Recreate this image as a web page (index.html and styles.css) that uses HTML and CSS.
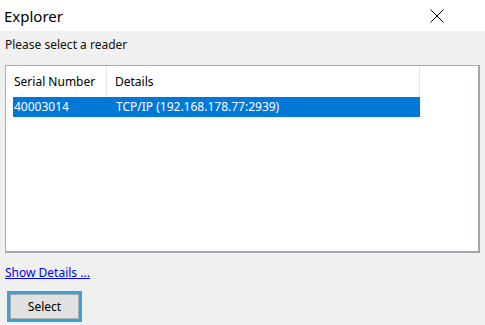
FILE: index.html
```html
<!DOCTYPE html>
<html lang="en">
<head>
    <meta charset="UTF-8">
    <title>Explorer</title>
    <link rel="stylesheet" href="styles.css">
</head>
<body>
    <div class="window">
        <div class="titlebar">
            <span class="title">Explorer</span>
            <svg class="close" width="14" height="14" viewBox="0 0 14 14">
                <path d="M0.5 0.5 L13.5 13.5 M13.5 0.5 L0.5 13.5" stroke="#000" stroke-width="1" fill="none"/>
            </svg>
        </div>
        <div class="content">
            <div class="prompt">Please select a reader</div>
            <div class="list">
                <div class="list-head">
                    <div class="col col-serial">Serial Number</div>
                    <div class="col col-details">Details</div>
                    <div class="col col-rest"></div>
                </div>
                <div class="list-row selected">
                    <div class="cell cell-serial">40003014</div>
                    <div class="cell cell-details">TCP/IP (192.168.178.77:2939)</div>
                </div>
            </div>
            <a class="details-link" href="#">Show Details ...</a>
            <button class="select-btn">Select</button>
        </div>
    </div>
</body>
</html>
```

FILE: styles.css
```css
body {
    margin: 0;
    font-family: "Noto Sans", "Liberation Sans", sans-serif;
    font-size: 12px;
    color: #000;
}
.window {
    width: 485px;
    height: 325px;
    display: flex;
    flex-direction: column;
    background-color: #f0f0f0;
    overflow: hidden;
}
.titlebar {
    height: 31px;
    background-color: #fff;
    display: flex;
    align-items: center;
    justify-content: space-between;
    padding: 0 41px 0 4px;
}
.title {
    font-size: 15px;
    color: #000;
}
.close {
    display: block;
}
.content {
    flex: 1;
    display: flex;
    flex-direction: column;
    align-items: flex-start;
    padding: 5px 4px 0 5px;
}
.prompt {
    height: 17px;
    line-height: 17px;
    color: #111;
}
.list {
    margin-top: 12px;
    width: 472px;
    height: 185px;
    background-color: #fff;
    border: 1px solid #adadad;
    border-right: 2px solid #a0a4ab;
    border-bottom: 2px solid #a0a4ab;
}
.list-head {
    display: flex;
    height: 31px;
}
.col {
    height: 31px;
    line-height: 31px;
    padding-left: 8px;
    box-sizing: border-box;
    border-right: 1px solid #e5e5e5;
}
.col-serial {
    width: 101px;
}
.col-details {
    width: 313px;
}
.col-rest {
    flex: 1;
    border-right: none;
}
.list-row {
    display: flex;
    margin-left: 7px;
    width: 407px;
    height: 20px;
    line-height: 20px;
}
.selected {
    background-color: #0078d7;
    color: #fff;
}
.cell {
    padding-left: 1px;
    box-sizing: border-box;
}
.cell-serial {
    width: 102px;
}
.cell-details {
    flex: 1;
}
.details-link {
    margin-top: 12px;
    color: #0000ff;
    text-decoration: underline;
    line-height: 16px;
}
.select-btn {
    margin-top: 10px;
    margin-left: 2px;
    width: 75px;
    height: 31px;
    font-family: inherit;
    font-size: 12px;
    color: #000;
    background-color: #e1e1e1;
    border: 3px solid #3aa0d8;
    box-shadow: inset 0 0 0 1px #adadad;
    padding: 0;
}
```
